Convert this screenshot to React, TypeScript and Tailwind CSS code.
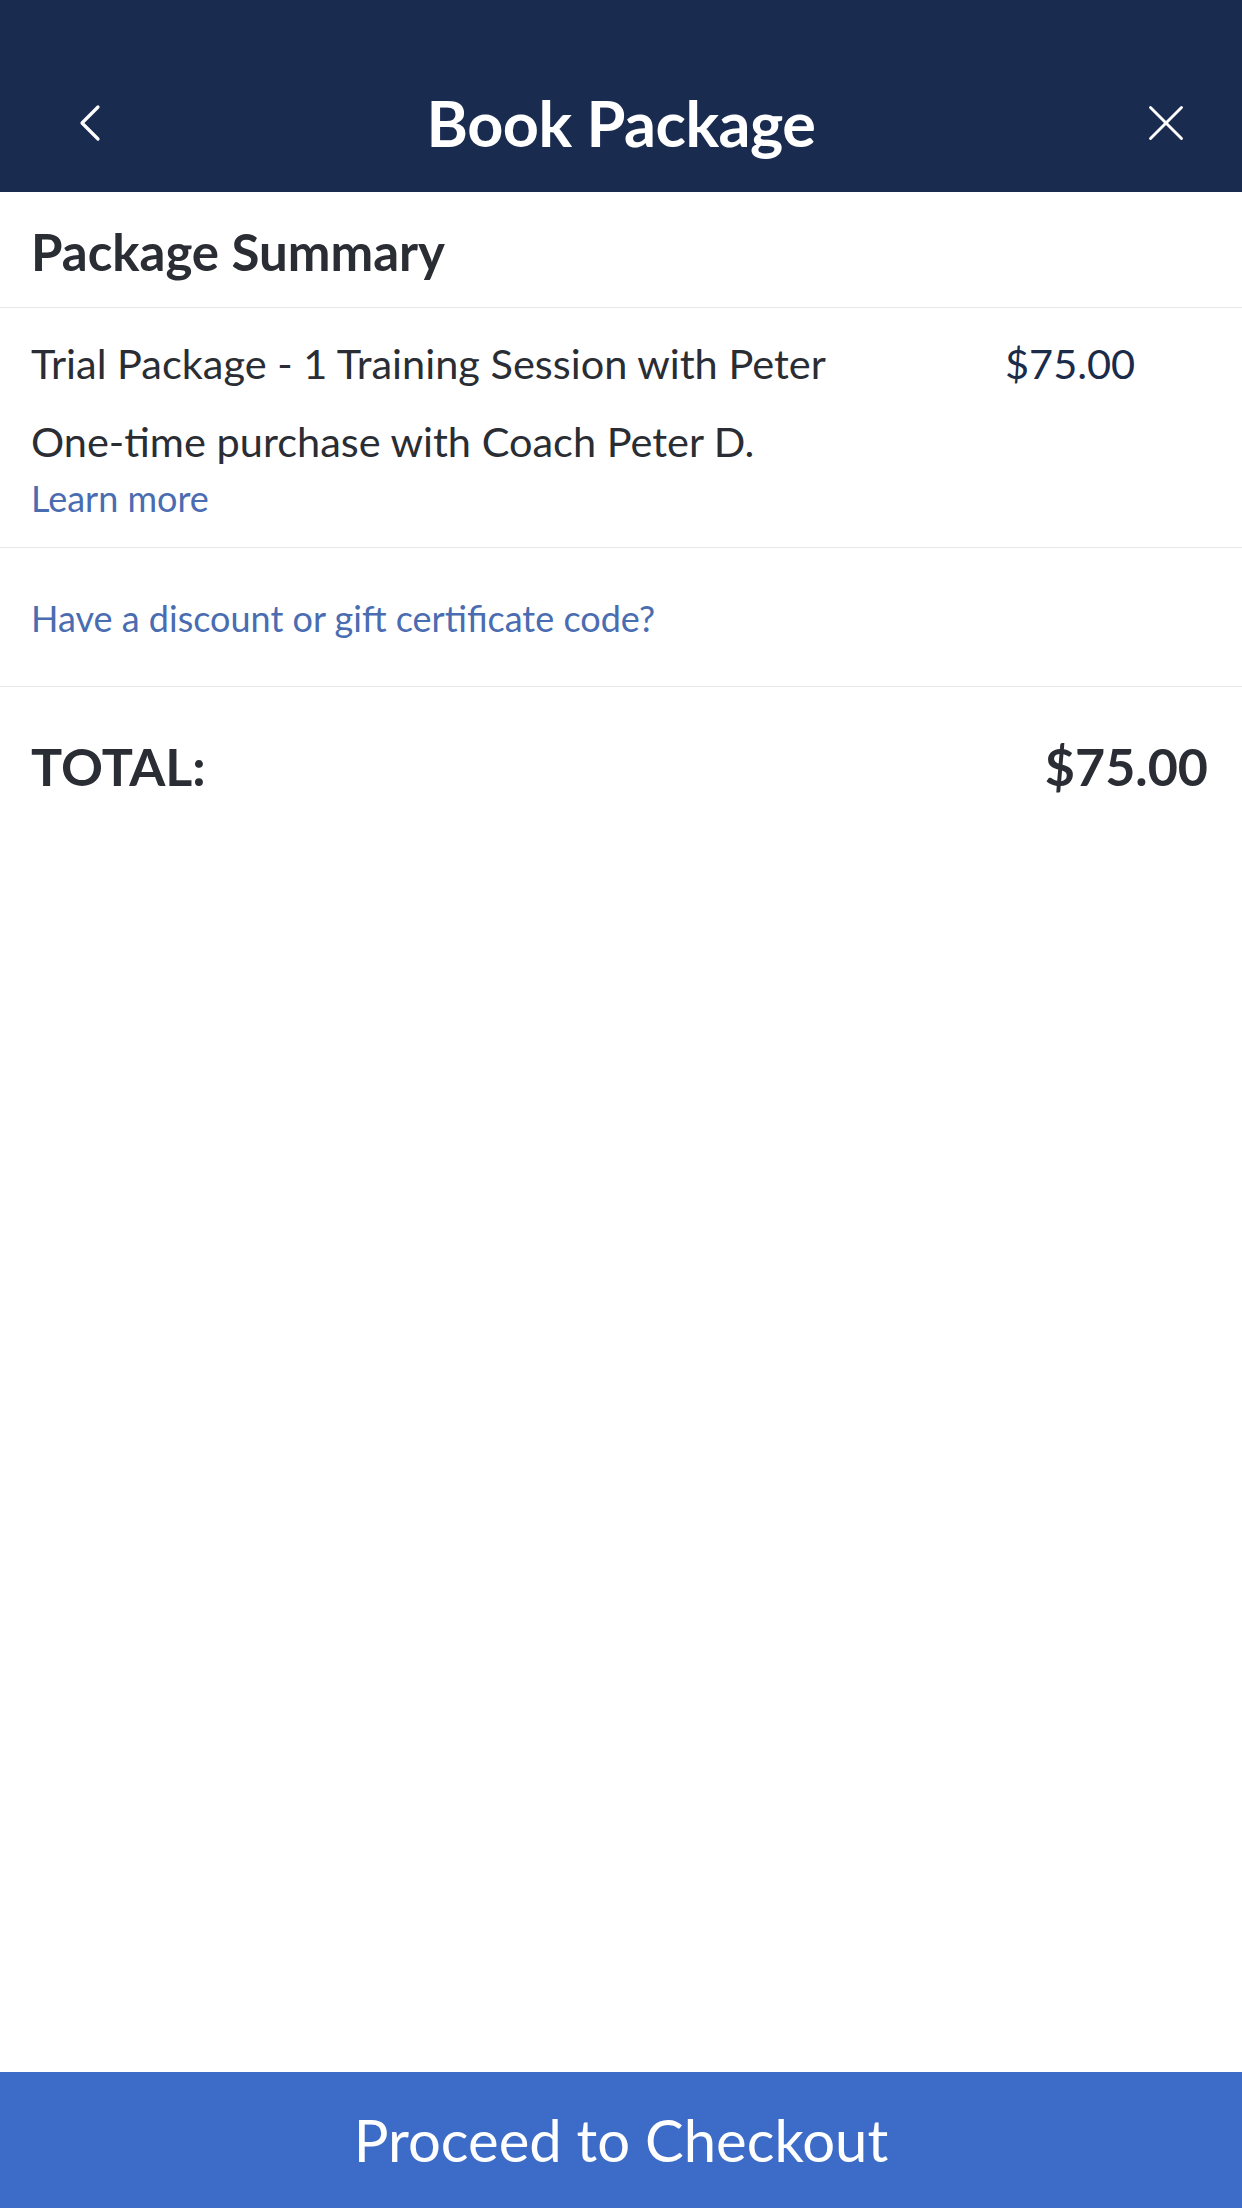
import { ChevronLeft, X } from 'lucide-react';

const font = { fontFamily: 'Lato, "Open Sans", sans-serif' };

const Header = () => {
    return (
        <div className="bg-[#1a2b50] h-[192px] pt-[54px] flex items-center px-[45px] text-white">
            <button className="w-[90px] flex items-center justify-center">
                <ChevronLeft size={64} strokeWidth={1.2} />
            </button>
            <h1 className="flex-1 text-center text-[63px] font-bold tracking-[-0.5px]">Book Package</h1>
            <button className="w-[90px] flex items-center justify-end">
                <X size={62} strokeWidth={1.1} />
            </button>
        </div>
    );
};

const App = () => {
    return (
        <div className="flex flex-col h-[2208px] bg-white text-[#2a2d33]" style={font}>
            <Header />

            <div className="h-[116px] border-b border-[#e6e8eb] px-[31px] pt-[28px]">
                <h2 className="text-[51px] font-bold leading-[64px] text-[#2a2d33]">Package Summary</h2>
            </div>

            <div className="h-[240px] border-b border-[#e6e8eb] pl-[31px] pr-[34px] pt-[34px]">
                <div className="flex justify-between items-center h-[42px]">
                    <span className="text-[41.5px] leading-[42px]">Trial Package - 1 Training Session with Peter</span>
                    <span className="w-[203px] text-[41.5px] leading-[42px] text-[#1b2b4a]">$75.00</span>
                </div>
                <p className="text-[41.5px] leading-[42px] mt-[36px]">One-time purchase with Coach Peter D.</p>
                <p className="text-[36px] leading-[40px] mt-[16px] text-[#4a6cb0]">Learn more</p>
            </div>

            <div className="h-[139px] border-b border-[#e6e8eb] px-[31px] flex items-center">
                <span className="text-[36px] leading-[42px] text-[#4a6cb0] mt-[2px]">Have a discount or gift certificate code?</span>
            </div>

            <div className="h-[158px] pl-[31px] pr-[34px] flex justify-between items-center">
                <span className="text-[52px] font-bold leading-[60px]">TOTAL:</span>
                <span className="text-[52px] font-bold leading-[60px]">$75.00</span>
            </div>

            <div className="flex-1" />

            <button className="h-[136px] w-full bg-[#3d6cc8] text-white text-[58px] leading-[64px]">
                Proceed to Checkout
            </button>
        </div>
    );
};

export default App;
